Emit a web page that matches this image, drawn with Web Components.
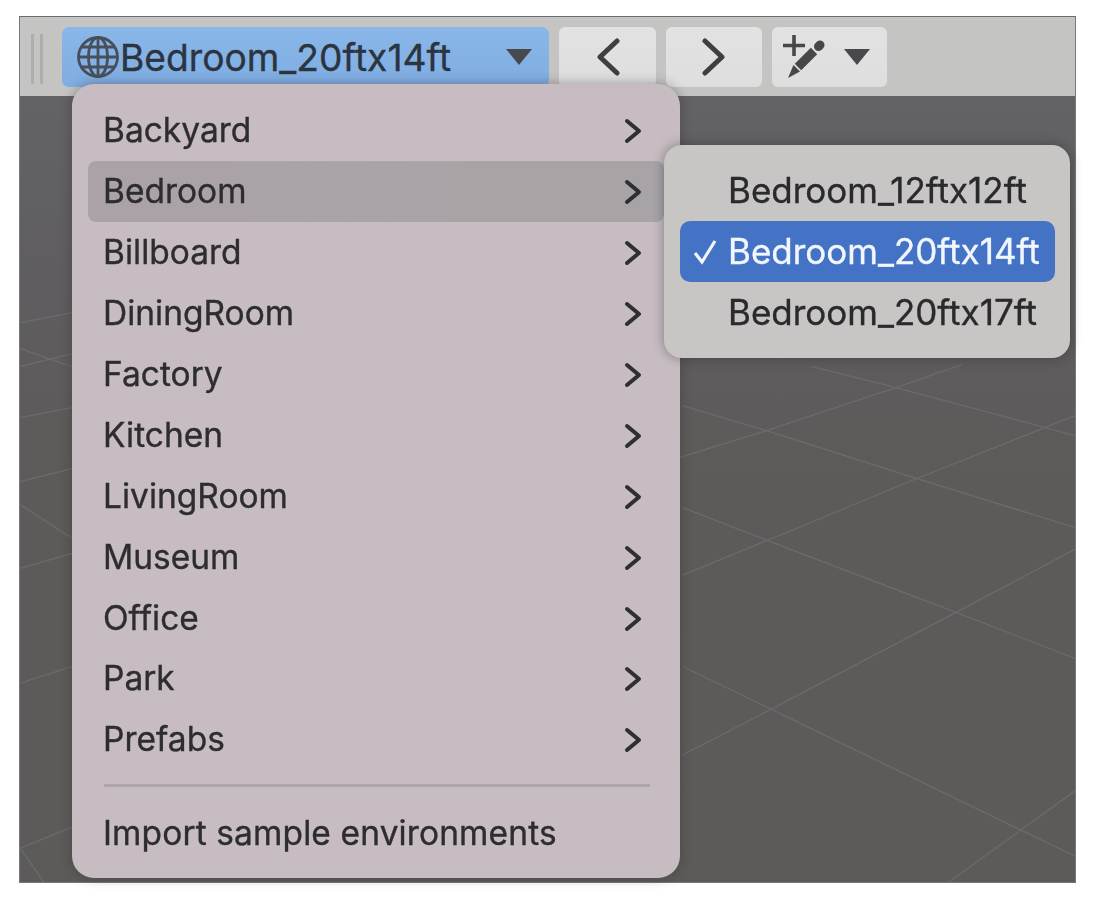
<!DOCTYPE html>
<html><head><meta charset="utf-8"><style>
html,body{margin:0;background:#fff}
body{padding:16px 24px 18px 19px;font-family:Inter,"Liberation Sans",sans-serif}
</style></head><body>
<scene-window>
  <scene-toolbar slot="toolbar"></scene-toolbar>
  <env-menu slot="overlay"></env-menu>
</scene-window>
<script>
const define=(n,html)=>customElements.define(n,class extends HTMLElement{constructor(){super();this.attachShadow({mode:'open'}).innerHTML=html;}});
define('scene-window',`<style>
:host{display:flex;flex-direction:column;width:1057px;height:867px;position:relative;box-sizing:border-box;border:1px solid #77787c;border-top:1.5px solid #6c6c6e;background:#5c5a59;filter:blur(.6px);-webkit-text-stroke:.35px currentColor}
.view{flex:1;position:relative;overflow:hidden;background:linear-gradient(#636266 0,#5f5d5f 25%,#5d5a59 50%,#5d5a5a 100%)}
svg{position:absolute;inset:0;width:100%;height:100%}
</style><slot name="toolbar"></slot><div class="view"><svg viewBox="20 96 1056 787"><g stroke="#6b6b6e" stroke-width="1.3" fill="none">
<path d="M683 406L767 431L918 479L1076 528M813 367L897 388L1076 436M683 508L768 541L957 613L1076 659M683 667L772 710L1022 831L1076 857"/>
<path d="M680 458L767 431L897 388L963 365M683 576L768 541L918 479L1076 416M683 756L772 710L957 613L1076 550M950 883L1022 831L1076 792"/>
<path d="M20 323L72 313M20 349L72 367M20 367L72 354M20 418L72 408M20 482L72 469M20 505L72 539M20 569L72 554M20 684L72 667M20 849L72 828M20 849L45 885"/>
</g></svg></div><slot name="overlay"></slot>`);
const glyph={
globe:`<svg width="46" height="46" viewBox="0 0 46 46" fill="none" stroke="#474f5b" stroke-width="2.800"><circle cx="23" cy="23" r="19.500"/><ellipse cx="23" cy="23" rx="9.500" ry="19.500"/><path d="M23 3.500V42.500M3.500 23H42.500M6.500 13H39.500M6.500 33H39.500"/></svg>`,
left:`<svg width="24" height="38" viewBox="0 0 24 38" fill="none" stroke="#3f3f41" stroke-width="5" stroke-linecap="round" stroke-linejoin="round"><path d="M21 3L4 19L21 35"/></svg>`,
right:`<svg width="24" height="38" viewBox="0 0 24 38" fill="none" stroke="#3f3f41" stroke-width="5" stroke-linecap="round" stroke-linejoin="round"><path d="M3 3L20 19L3 35"/></svg>`,
wand:`<svg width="44" height="46" viewBox="0 0 44 46" style="flex:none"><path d="M11 1V22M0 11.500H22" stroke="#474749" stroke-width="3.600" fill="none"/><path d="M15 33L31 17" stroke="#474749" stroke-width="9" fill="none"/><path d="M35.500 12.500L37 11" stroke="#474749" stroke-width="9" stroke-linecap="round" fill="none"/><path d="M10.500 31L17 37.500L5 44Z" fill="#474749"/></svg>`
};
define('tool-btn',`<style>
:host{display:flex;align-items:center;justify-content:center;box-sizing:border-box;height:60px;border-radius:6px;background:linear-gradient(#e2e2e2,#dedede)}
</style><slot></slot>`);
define('tri-down',`<style>:host{display:block;flex:none;width:0;height:0;border-left:13.500px solid transparent;border-right:13.500px solid transparent;border-top:16px solid #48494c}</style>`);
define('scene-toolbar',`<style>
:host{display:flex;align-items:flex-start;height:79px;box-sizing:border-box;padding:10px 0 0 11px;background:#c4c4c2;flex:none;color:#2c3440}
.grip{width:12px;height:50px;margin:7px 19px 0 0;border-left:3px solid #a9a9a9;border-right:3px solid #a9a9a9;box-sizing:border-box;flex:none;opacity:.8}
.env{display:flex;align-items:center;width:487px;height:60px;box-sizing:border-box;padding:0 17px 0 13px;border-radius:7px;background:linear-gradient(#8ab7e8,#7fade3);margin-right:10px;font-size:37.200px;white-space:nowrap}
.env span{flex:1;margin-left:-1px}
tool-btn{margin-right:10px}
.a{width:97px}.b{width:96px}.c{width:115px;gap:17px;padding-left:11px;justify-content:flex-start}
</style><div class="grip"></div><div class="env">${glyph.globe}<span>Bedroom_20ftx14ft</span><tri-down></tri-down></div>
<tool-btn class="a">${glyph.left}</tool-btn><tool-btn class="b">${glyph.right}</tool-btn><tool-btn class="c">${glyph.wand}<tri-down></tri-down></tool-btn>`);
define('menu-row',`<style>
:host{display:flex;align-items:center;justify-content:space-between;height:60.900px;box-sizing:border-box;padding:0 22px 0 15px;font-size:33.500px;color:#2d2d30;border-radius:8px;white-space:nowrap}
:host([hover]){background:linear-gradient(90deg,#aaa2a7,#a9a3a6 90%,#a8a3a6)}
svg{flex:none;margin-top:2px}
</style><span><slot></slot></span><svg width="18" height="26" viewBox="0 0 18 26" fill="none" stroke="#2f2f33" stroke-width="4" stroke-linecap="round" stroke-linejoin="round"><path d="M3 3L15 13L3 23"/></svg>`);
define('sub-row',`<style>
:host{display:flex;align-items:center;height:60.900px;box-sizing:border-box;padding-left:48px;font-size:35px;color:#2a2a2d;border-radius:10px;white-space:nowrap;position:relative}
:host([sel]){background:#4472c4;color:#f2f6ff}
.c{position:absolute;left:13px;top:18px;display:none}:host([sel]) .c{display:block}
</style><svg class="c" width="24" height="26" viewBox="0 0 24 26" fill="none" stroke="#f2f6ff" stroke-width="3.200"><path d="M2 14L9 23L22 2"/></svg><slot></slot>`);
define('env-menu',`<style>
:host{display:block;font-family:inherit}
.main{position:absolute;left:52px;top:67px;width:608px;height:794px;box-sizing:border-box;padding:16px 16px 0;border-radius:22px;background:#c6bcc1;box-shadow:0 0 12px rgba(40,40,40,.4)}
.sep{height:3px;background:#aca5a9;margin:14px 14px 0 16px}
.sub{position:absolute;left:644px;top:128px;width:406px;height:213px;box-sizing:border-box;padding:15px 15px 0 16px;border-radius:18px;background:#c8c5c5;box-shadow:0 0 12px rgba(30,30,30,.4)}
.mi{font-size:33.500px;color:#2d2d30;padding-left:15px;margin-top:27px;line-height:39px;white-space:nowrap;letter-spacing:.12px}
</style><div class="main">
<menu-row>Backyard</menu-row><menu-row hover>Bedroom</menu-row><menu-row>Billboard</menu-row><menu-row>DiningRoom</menu-row><menu-row>Factory</menu-row><menu-row>Kitchen</menu-row><menu-row>LivingRoom</menu-row><menu-row>Museum</menu-row><menu-row>Office</menu-row><menu-row>Park</menu-row><menu-row>Prefabs</menu-row>
<div class="sep"></div><div class="mi">Import sample environments</div></div>
<div class="sub"><sub-row>Bedroom_12ftx12ft</sub-row><sub-row sel>Bedroom_20ftx14ft</sub-row><sub-row>Bedroom_20ftx17ft</sub-row></div>`);
</script></body></html>
